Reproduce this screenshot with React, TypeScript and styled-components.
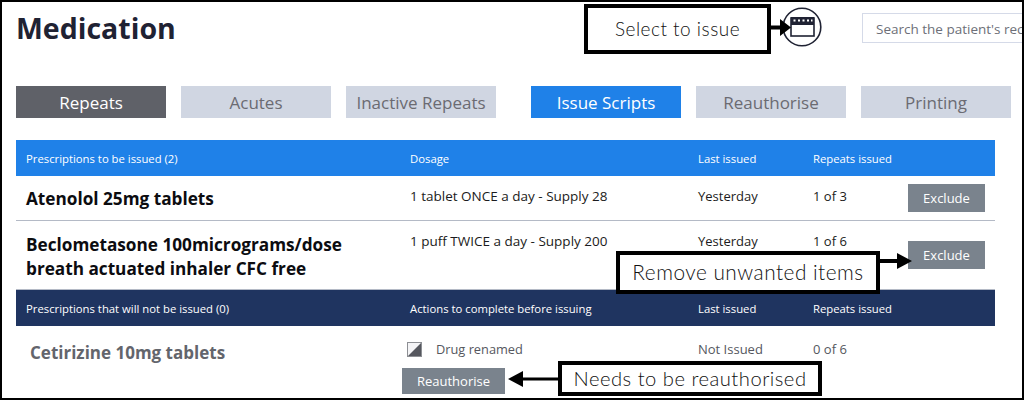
import React from "react";
import styled, { createGlobalStyle } from "styled-components";

const Global = createGlobalStyle`
  html, body { margin: 0; padding: 0; background: #fff; }
  body { font-family: "Open Sans", "Noto Sans", "Liberation Sans", sans-serif; }
`;

const Frame = styled.div`
  position: relative;
  box-sizing: border-box;
  width: 1024px;
  height: 400px;
  border: 2px solid #000;
  overflow: hidden;
  background: #fff;
`;

const Page = styled.div`
  width: 979px;
  margin-left: 14px;
  display: flex;
  flex-direction: column;
`;

const TopBar = styled.div`
  display: flex;
  align-items: center;
  height: 52px;
  margin-bottom: 32px;
`;

const Title = styled.h1`
  flex: none;
  width: 161px;
  margin: -1px 0 0 0;
  font-size: 28.5px;
  line-height: 52px;
  font-weight: 700;
  color: #1f2233;
  white-space: nowrap;
`;

const IssueIcon = styled.svg`
  flex: none;
  margin-left: 605px;
  margin-top: -3px;
`;

const Search = styled.div`
  flex: none;
  box-sizing: border-box;
  width: 200px;
  height: 30px;
  margin-left: 40px;
  border: 1px solid #d5dae8;
  padding-left: 13px;
  font-size: 13.5px;
  line-height: 30px;
  color: #6d6f78;
  white-space: nowrap;
  overflow: hidden;
`;

const Tabs = styled.div`
  display: flex;
  margin-bottom: 22px;
`;

const Tab = styled.div<{ $kind?: "dark" | "blue"; $gapLeft?: number }>`
  flex: none;
  width: 150px;
  height: 32px;
  margin-left: ${(p) => p.$gapLeft ?? 15}px;
  background: ${(p) =>
    p.$kind === "dark" ? "#5f6168" : p.$kind === "blue" ? "#1f81e8" : "#d0d6e2"};
  color: ${(p) => (p.$kind ? "#fff" : "#6b6b72")};
  font-size: 17px;
  line-height: 34px;
  text-align: center;
  white-space: nowrap;
`;

const Table = styled.div`
  display: flex;
  flex-direction: column;
`;

const columns = "384px 288px 115px 95px 1fr";

const HeaderRow = styled.div<{ $dark?: boolean }>`
  display: grid;
  grid-template-columns: ${columns};
  align-items: center;
  height: 36px;
  padding-left: 10px;
  background: ${(p) => (p.$dark ? "#1f3460" : "#1f81e8")};
  color: #fff;
  font-size: 11.3px;
  white-space: nowrap;
`;

const Row = styled.div<{ $h: number; $line?: boolean }>`
  display: grid;
  grid-template-columns: ${columns};
  box-sizing: border-box;
  height: ${(p) => p.$h}px;
  padding-left: 10px;
  border-bottom: ${(p) => (p.$line ? "1px solid #b4bac6" : "none")};
`;

const DrugName = styled.div<{ $muted?: boolean; $top: number }>`
  font-size: ${(p) => (p.$muted ? 17 : 17.2)}px;
  line-height: 24px;
  font-weight: 700;
  color: ${(p) => (p.$muted ? "#63656c" : "#0c0c10")};
  padding-top: ${(p) => p.$top}px;
  padding-left: ${(p) => (p.$muted ? 4 : 0)}px;
  white-space: nowrap;
`;

const Cell = styled.div<{ $top: number; $muted?: boolean }>`
  padding-top: ${(p) => p.$top}px;
  font-size: 13px;
  line-height: 18px;
  color: ${(p) => (p.$muted ? "#55575e" : "#1b1b20")};
  white-space: nowrap;
`;

const Dosage = styled(Cell)`
  font-size: 13.5px;
`;

const ActionCell = styled.div`
  display: flex;
  flex-direction: column;
  align-items: flex-start;
  padding-top: 14px;
`;

const ActionLine = styled.div`
  display: flex;
  align-items: center;
  gap: 14px;
  height: 18px;
  margin-left: -3px;
  font-size: 12.8px;
  color: #55575e;
  white-space: nowrap;
`;

const Swatch = styled.svg`
  flex: none;
`;

const ButtonCell = styled.div<{ $top: number }>`
  padding-top: ${(p) => p.$top}px;
`;

const GreyButton = styled.button<{ $wide?: boolean }>`
  display: block;
  box-sizing: border-box;
  width: ${(p) => (p.$wide ? 103 : 77)}px;
  height: ${(p) => (p.$wide ? 26 : 28)}px;
  margin: ${(p) => (p.$wide ? "10px 0 0 -8px" : 0)};
  padding: 0;
  border: none;
  background: #7a838d;
  color: #fff;
  font-family: inherit;
  font-size: 13px;
`;

const Callout = styled.div<{ $x: number; $y: number; $w: number; $h: number; $size: number }>`
  position: absolute;
  left: ${(p) => p.$x - 2}px;
  top: ${(p) => p.$y - 2}px;
  width: ${(p) => p.$w}px;
  height: ${(p) => p.$h}px;
  box-sizing: border-box;
  border: 4px solid #000;
  background: #fff;
  color: #111;
  font-family: Lato, "Liberation Sans", sans-serif;
  font-weight: 300;
  font-size: ${(p) => p.$size}px;
  letter-spacing: 0.5px;
  padding-bottom: 2px;
  display: flex;
  align-items: center;
  justify-content: center;
  white-space: nowrap;
`;

const Arrow = styled.svg<{ $x: number; $y: number }>`
  position: absolute;
  left: ${(p) => p.$x - 2}px;
  top: ${(p) => p.$y - 2}px;
`;

export default function App() {
  return (
    <Frame>
      <Global />
      <Page>
        <TopBar>
          <Title>Medication</Title>
          <IssueIcon width="40" height="40" viewBox="0 0 40 40" fill="none">
            <circle cx="20" cy="20" r="18.8" stroke="#1f2233" strokeWidth="1.6" />
            <rect x="9" y="11" width="23" height="18" stroke="#1f2233" strokeWidth="1.6" />
            <rect x="9" y="10" width="23" height="8" fill="#1f2233" />
            <path d="M11.500 13.500h2M16 13.500h2M20.500 13.500h2M25 13.500h2M29 13.500h1.500" stroke="#fff" strokeWidth="2" />
          </IssueIcon>
          <Search>Search the patient's records</Search>
        </TopBar>
        <Tabs>
          <Tab $kind="dark" $gapLeft={0}>Repeats</Tab>
          <Tab>Acutes</Tab>
          <Tab>Inactive Repeats</Tab>
          <Tab $kind="blue" $gapLeft={35}>Issue Scripts</Tab>
          <Tab>Reauthorise</Tab>
          <Tab>Printing</Tab>
        </Tabs>
        <Table>
          <HeaderRow>
            <span>Prescriptions to be issued (2)</span>
            <span>Dosage</span>
            <span>Last issued</span>
            <span>Repeats issued</span>
            <span />
          </HeaderRow>
          <Row $h={45} $line>
            <DrugName $top={11}>Atenolol 25mg tablets</DrugName>
            <Dosage $top={11}>1 tablet ONCE a day - Supply 28</Dosage>
            <Cell $top={11}>Yesterday</Cell>
            <Cell $top={11}>1 of 3</Cell>
            <ButtonCell $top={8}><GreyButton>Exclude</GreyButton></ButtonCell>
          </Row>
          <Row $h={69} $line>
            <DrugName $top={12}>Beclometasone 100micrograms/dose<br />breath actuated inhaler CFC free</DrugName>
            <Dosage $top={11}>1 puff TWICE a day - Supply 200</Dosage>
            <Cell $top={11}>Yesterday</Cell>
            <Cell $top={11}>1 of 6</Cell>
            <ButtonCell $top={20}><GreyButton>Exclude</GreyButton></ButtonCell>
          </Row>
          <HeaderRow $dark>
            <span>Prescriptions that will not be issued (0)</span>
            <span>Actions to complete before issuing</span>
            <span>Last issued</span>
            <span>Repeats issued</span>
            <span />
          </HeaderRow>
          <Row $h={71}>
            <DrugName $muted $top={15}>Cetirizine 10mg tablets</DrugName>
            <ActionCell>
              <ActionLine>
                <Swatch width="15" height="15" viewBox="0 0 15 15">
                  <rect width="15" height="15" fill="#8d8f94" />
                  <rect x="1" y="1" width="13" height="13" fill="#55575e" />
                  <path d="M1 1h13L1 14z" fill="#f4f4f6" />
                </Swatch>
                Drug renamed
              </ActionLine>
              <GreyButton $wide>Reauthorise</GreyButton>
            </ActionCell>
            <Cell $top={14} $muted>Not Issued</Cell>
            <Cell $top={14} $muted>0 of 6</Cell>
            <span />
          </Row>
        </Table>
      </Page>

      <Callout $x={584} $y={4} $w={187} $h={50} $size={19}>Select to issue</Callout>
      <Arrow $x={771} $y={18} width="22" height="20" viewBox="0 0 22 20">
        <path d="M0 7.500h9V1l11 8.500L9 18v-6.500H0z" fill="#000" />
      </Arrow>

      <Callout $x={616} $y={251} $w={264} $h={43} $size={20.8}>Remove unwanted items</Callout>
      <Arrow $x={880} $y={252} width="34" height="18" viewBox="0 0 34 18">
        <path d="M0 7h17V1l15 8-15 8v-6H0z" fill="#000" />
      </Arrow>

      <Callout $x={558} $y={361} $w={264} $h={35} $size={20.2}>Needs to be reauthorised</Callout>
      <Arrow $x={507} $y={370} width="51" height="18" viewBox="0 0 51 18">
        <path d="M51 7.500H16V1L1 9l15 8v-6.500h35z" fill="#000" />
      </Arrow>
    </Frame>
  );
}
